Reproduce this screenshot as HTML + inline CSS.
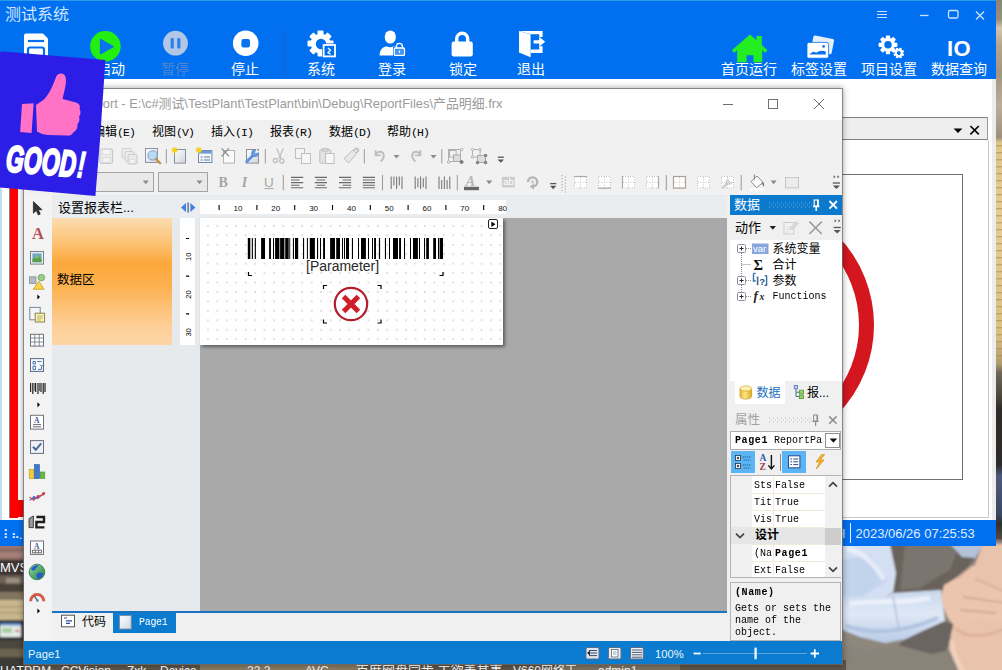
<!DOCTYPE html>
<html lang="zh-CN">
<head>
<meta charset="utf-8">
<title>测试系统</title>
<style>
html,body{margin:0;padding:0;}
body{width:1002px;height:670px;position:relative;overflow:hidden;background:#6b5f52;font-family:"Liberation Sans","Noto Sans CJK SC",sans-serif;font-size:12px;color:#000;}
.a{position:absolute;}
.t{position:absolute;white-space:nowrap;line-height:1;}
.ui{font-family:"Liberation Sans","Noto Sans CJK SC",sans-serif;}
.mono{font-family:"Liberation Mono",monospace;font-size:11.5px;letter-spacing:-.9px;position:relative;top:0px;}
.pg{position:absolute;white-space:nowrap;line-height:1;font-family:"Liberation Mono",monospace;font-size:10px;transform:scaleY(1.18);transform-origin:0 0;}
.ss{font-family:"Liberation Mono","Noto Sans CJK SC",monospace;}
svg{position:absolute;overflow:visible;}
/* main window */
#main{left:0;top:0;width:996px;height:546px;background:#fff;overflow:hidden;}
#hdr{left:0;top:0;width:996px;height:79px;background:#0070f0;}
.lbl{color:#fff;font-size:14px;top:62px;}
/* designer */
#dsg{left:24px;top:89px;width:818px;height:575px;background:#f0f0f0;box-shadow:0 0 0 1px rgba(110,110,110,.75),0 0 6px 1px rgba(0,0,0,.38);overflow:hidden;}
</style>
</head>
<body>
<!-- WALLPAPER -->
<div class="a" id="wall" style="left:0;top:0;width:1002px;height:670px;">
<svg width="1002" height="670" viewBox="0 0 1002 670" style="left:0;top:0;">
<defs>
<linearGradient id="stone" x1="0" y1="0" x2="0" y2="1"><stop offset="0" stop-color="#c9b48c"/><stop offset=".25" stop-color="#d8c28f"/><stop offset=".5" stop-color="#cdb078"/><stop offset=".75" stop-color="#a08a68"/><stop offset="1" stop-color="#7f7468"/></linearGradient>
<linearGradient id="shirt" x1="0" y1="0" x2="1" y2="1"><stop offset="0" stop-color="#dbe6f5"/><stop offset=".5" stop-color="#c4d6ee"/><stop offset="1" stop-color="#b4c8e4"/></linearGradient>
<linearGradient id="skin" x1="0" y1="0" x2="1" y2="1"><stop offset="0" stop-color="#ecc9b4"/><stop offset="1" stop-color="#e2b59c"/></linearGradient>
</defs>
<!-- right strip -->
<defs>
<linearGradient id="stone2" gradientUnits="userSpaceOnUse" x1="0" y1="0" x2="0" y2="560">
<stop offset="0" stop-color="#8e8474"/><stop offset=".035" stop-color="#9a8f7c"/><stop offset=".05" stop-color="#d2c6b0"/><stop offset=".08" stop-color="#b5a78f"/><stop offset=".13" stop-color="#a39580"/><stop offset=".19" stop-color="#bcae96"/><stop offset=".245" stop-color="#9d8f79"/>
<stop offset=".255" stop-color="#dcc68a"/><stop offset=".4" stop-color="#e3cd92"/><stop offset=".6" stop-color="#d8c084"/><stop offset=".65" stop-color="#b09a6c"/>
<stop offset=".665" stop-color="#6e665a"/><stop offset=".71" stop-color="#4a443c"/><stop offset=".73" stop-color="#2e2a26"/><stop offset=".83" stop-color="#2c2a2a"/><stop offset=".85" stop-color="#4c5a7a"/><stop offset=".92" stop-color="#3c4660"/><stop offset=".935" stop-color="#322f2e"/><stop offset=".965" stop-color="#5a4a42"/><stop offset=".985" stop-color="#e6c6b2"/><stop offset="1" stop-color="#e8c8b4"/>
</linearGradient>
<pattern id="straw" width="8" height="7" patternUnits="userSpaceOnUse"><rect width="8" height="7" fill="none"/><rect y="5" width="8" height="1.4" fill="#a8864a" opacity=".55"/></pattern>
</defs>
<rect x="990" y="0" width="12" height="560" fill="url(#stone2)"/>
<rect x="990" y="143" width="12" height="218" fill="url(#straw)"/>
<!-- bottom right photo -->
<defs><filter id="soft" x="-5%" y="-5%" width="110%" height="110%"><feGaussianBlur stdDeviation="0.9"/></filter>
<linearGradient id="slv" x1="0" y1="0" x2="0" y2="1"><stop offset="0" stop-color="#c9d8ee"/><stop offset=".45" stop-color="#dfe8f6"/><stop offset="1" stop-color="#b9cbe6"/></linearGradient>
</defs>
<g filter="url(#soft)">
<rect x="838" y="540" width="170" height="136" fill="#8b847b"/>
<polygon points="838,628 860,637 885,643 906,639 925,630 931,654 898,645 870,650 838,644" fill="#8e877d"/>
<polygon points="860,660 900,648 932,655 948,652 958,676 838,676 838,650" fill="#8a8379"/>
<!-- vest upper -->
<polygon points="889,544 983,544 974,559 968,567 956,577 941,591 893,597 896,573" fill="#6a625b"/>
<polygon points="905,544 960,544 950,570 920,588 900,590" fill="#7a746e"/>
<!-- collar/shirt top right -->
<polygon points="950,544 984,544 975,558 962,557" fill="#b4c2da"/>
<!-- shirt body -->
<polygon points="838,544 890,544 896,573 893,592 885,597 838,600" fill="#d3e0f3"/>
<polygon points="838,560 870,556 888,580 860,598 838,598" fill="#c2d3ec"/>
<path d="M846,548 C862,552 874,562 884,580" stroke="#eef3fb" stroke-width="5" fill="none" opacity=".8"/>
<!-- sleeve -->
<polygon points="838,596 885,597 893,593 941,590 945,621 925,630 906,639 885,643 860,637 838,628" fill="url(#slv)"/>
<path d="M850,604 C872,600 900,604 930,598" stroke="#eef3fb" stroke-width="5" fill="none" opacity=".85"/>
<path d="M846,626 C870,634 900,634 938,618" stroke="#a9bddc" stroke-width="4" fill="none" opacity=".8"/>
<path d="M893,596 l6,34" stroke="#aebfdc" stroke-width="2" fill="none" opacity=".7"/>
<!-- vest lower -->
<polygon points="925,630 945,621 956,626 951,637 946,651 931,654 898,645 906,639" fill="#6b6560"/>
<!-- woman's arm -->
<polygon points="983,544 1008,544 1008,676 960,676 956,664 949,649 951,634 954,622 970,600 972,572" fill="#e9c3ac"/>
<path d="M956,628 C966,640 990,636 1006,628" stroke="#d9a78f" stroke-width="2.4" fill="none" opacity=".8"/>
<path d="M952,640 C952,655 960,668 966,676" stroke="#f2d3c0" stroke-width="5" fill="none" opacity=".8"/>
<!-- hand -->
<path d="M941,597 L944,585 L958,577 L972,566 C976,565 978,568 977,571 L974,578 L1008,590 L1008,622 L975,621 L953,624 C947,619 943,608 941,597Z" fill="#ebc5ae"/>
<path d="M975,579 L1006,592 M963,597 L1006,603 M960,610 L996,613" stroke="#cfa088" stroke-width="1.3" fill="none"/>
<path d="M958,578 L970,568" stroke="#d8ac95" stroke-width="1.5" fill="none"/>
</g>
<!-- bottom left photo -->
<g filter="url(#soft)">
<rect x="-3" y="543" width="33" height="130" fill="#5a4e44"/>
<rect x="-3" y="545" width="33" height="15" fill="#9c7872"/>
<rect x="-3" y="549" width="33" height="1.6" fill="#7c5c58"/><rect x="-3" y="554" width="33" height="1.6" fill="#b48c84"/>
<rect x="-3" y="559.5" width="33" height="16" fill="#3c3632"/>
<rect x="-3" y="575.5" width="33" height="8" fill="#6c6256"/>
<rect x="6" y="578" width="14" height="6" fill="#9a9080"/>
<rect x="-3" y="583.5" width="33" height="9" fill="#4a4238"/>
<rect x="-3" y="592" width="33" height="8" fill="#80745e"/>
<rect x="-3" y="600" width="33" height="20" fill="#c9b68e"/>
<rect x="-3" y="606" width="33" height="1.4" fill="#b09a70"/><rect x="-3" y="612" width="33" height="1.4" fill="#b09a70"/>
<rect x="-3" y="620" width="27" height="20" fill="#2c3034"/>
<rect x="0" y="623" width="21" height="14" fill="#e4ece6"/>
<rect x="0" y="623" width="21" height="2.4" fill="#5a86c0"/>
<rect x="2" y="628" width="10" height="5" fill="#a8d0a0"/><rect x="15" y="630" width="4" height="1.6" fill="#d04030"/>
<rect x="-3" y="640" width="33" height="9" fill="#4c4a3c"/>
<rect x="-3" y="649" width="33" height="8" fill="#6c6450"/>
<rect x="-3" y="657" width="33" height="16" fill="#3e3a34"/>
</g>
<!-- bottom strip -->
<rect x="24" y="660" width="822" height="10" fill="#5e5346"/>
<rect x="200" y="660" width="160" height="10" fill="#8a7a62"/>
<rect x="560" y="660" width="120" height="10" fill="#7d7060"/>
</svg>
<div class="t ui" style="left:0;top:561px;color:#fff;font-size:13px;">MVS</div>
<div class="t ui" style="left:0;top:665px;color:#fff;font-size:12px;letter-spacing:.3px;">HATPRM</div>
<div class="t ui" style="left:61px;top:665px;color:#fff;font-size:12px;">CCVision</div>
<div class="t ui" style="left:127px;top:665px;color:#fff;font-size:12px;">Zxk</div>
<div class="t ui" style="left:160px;top:665px;color:#fff;font-size:12px;">Device</div>
<div class="t ui" style="left:247px;top:665px;color:#fff;font-size:12px;">22.2</div>
<div class="t ui" style="left:305px;top:665px;color:#fff;font-size:12px;">AVC</div>
<div class="t ui" style="left:356px;top:664px;color:#fff;font-size:13px;">百度网盘同步 工欲善其事</div>
<div class="t ui" style="left:513px;top:665px;color:#fff;font-size:12px;">V660网络工</div>
<div class="t ui" style="left:598px;top:665px;color:#fff;font-size:12px;">admin1</div>
</div>
<!-- MAIN WINDOW -->
<div class="a" id="main">
<div class="a" id="hdr"></div>
<div class="a" style="left:0;top:0;width:996px;height:1px;background:#2b9be8;"></div>
<div class="a" style="left:0;top:79px;width:1.5px;height:441px;background:#c6dcea;"></div>
<div class="t ui" style="left:5px;top:7px;font-size:16px;color:#d4e6ff;">测试系统</div>
<!-- window controls -->
<svg width="120" height="24" viewBox="870 4 120 24" style="left:870px;top:4px;" fill="none" stroke="#cfe2fb" stroke-width="1.3">
<path d="M877,11.5h10M877,14.5h10M877,17.5h10" stroke-width="1"/>
<path d="M920,15.5h8.5"/>
<rect x="948.5" y="10.5" width="9.5" height="7.5" rx="1.5"/>
<path d="M976,11.5l8,8M984,11.5l-8,8"/>
</svg>
<!-- toolbar icons -->
<svg width="996" height="79" viewBox="0 0 996 79" style="left:0;top:0;">
<!-- save -->
<path d="M26,33.5h17l5,5v23h-24v-26a2,2 0 0 1 2,-2z" fill="#fff"/>
<path d="M28,41h16" stroke="#0070f0" stroke-width="2.2" fill="none"/>
<rect x="28" y="47.5" width="16" height="12" rx="2" fill="none" stroke="#0070f0" stroke-width="2.2"/>
<!-- start -->
<circle cx="105.4" cy="46.2" r="15.3" fill="#22ee11"/>
<polygon points="100.6,39.6 100.6,53.6 113,46.6" fill="#0a72ee" stroke="#0a72ee" stroke-width="1.5" stroke-linejoin="round"/>
<!-- pause -->
<circle cx="175.5" cy="43.2" r="12.4" fill="#b2c6e6"/>
<rect x="170.6" y="38" width="3.2" height="10.5" rx="1" fill="#2f7fe8"/>
<rect x="177.2" y="38" width="3.2" height="10.5" rx="1" fill="#2f7fe8"/>
<!-- stop -->
<circle cx="245.7" cy="43.2" r="12.8" fill="#fff"/>
<rect x="241.4" y="39" width="8.6" height="8.6" rx="2" fill="#0a72ee"/>
<!-- separator -->
<rect x="283.7" y="31" width="1.2" height="47" fill="#2a62b8"/>
<!-- system gear -->
<g transform="translate(320.5,43.5)" fill="#fff">
<circle r="9.8"/>
<g id="gt"><rect x="-3" y="-13" width="6" height="6" rx="1"/></g>
<use href="#gt" transform="rotate(45)"/><use href="#gt" transform="rotate(90)"/><use href="#gt" transform="rotate(135)"/><use href="#gt" transform="rotate(180)"/><use href="#gt" transform="rotate(225)"/><use href="#gt" transform="rotate(270)"/><use href="#gt" transform="rotate(315)"/>
<circle cx="0.5" cy="0.5" r="5.2" fill="#0070f0"/>
</g>
<rect x="322" y="43.5" width="14" height="14" fill="#0070f0"/>
<rect x="323.6" y="45" width="11.4" height="11.4" fill="none" stroke="#fff" stroke-width="1.8"/>
<path d="M328,48l2.5,2.2l-2.5,2.4l2.5,1.6" stroke="#fff" stroke-width="1.3" fill="none"/>
<!-- login -->
<ellipse cx="390.3" cy="37" rx="5.6" ry="6.6" fill="#fff"/>
<path d="M379.6,55.6c0,-6 3,-8.4 7,-9.4c2.2,1.4 5,1.4 7.2,0c2,0.5 3.4,1.2 4.6,2.4v7z" fill="#fff"/>
<rect x="393" y="46.8" width="12.6" height="9.6" fill="#0070f0"/>
<rect x="394.3" y="48" width="10.2" height="7.4" rx="1" fill="#3f93f3" stroke="#fff" stroke-width="1.3"/>
<path d="M396.4,48v-1.6a3,3 0 0 1 6,0v1.6" fill="none" stroke="#fff" stroke-width="1.4"/>
<rect x="398.8" y="50.6" width="1.3" height="2.2" fill="#fff"/>
<!-- lock -->
<rect x="451.6" y="41.6" width="21.2" height="14.8" rx="2.2" fill="#fff"/>
<path d="M456.7,42v-3.2a5.5,5.5 0 0 1 11,0v3.2" fill="none" stroke="#fff" stroke-width="3.4"/>
<!-- exit -->
<path d="M519,31h23.6v6h-3.4v-2.8h-8.5z" fill="#fff"/>
<path d="M519,31l11.6,3.6v22.6l-11.6,-4.6z" fill="#fff"/>
<path d="M530.6,49.6h8.6v-3.4h3.4v6.8h-12z" fill="#fff"/>
<path d="M533.6,40.2h5.6v-3.4l6,5l-6,5v-3.4h-5.6z" fill="#fff"/>
<!-- home -->
<path d="M750,34.6l17.6,15.6l-2.4,2.6l-3,-2.6v12h-8.8v-7h-6.8v7h-9.4v-12l-3,2.6l-2.4,-2.6z" fill="#22ee22"/>
<rect x="756.4" y="36" width="5.4" height="9" fill="#22ee22"/>
<!-- label setting -->
<g transform="rotate(11 822 45)"><rect x="812" y="37" width="21" height="15.6" rx="1.6" fill="#e6eefc"/></g>
<rect x="807" y="42.4" width="21.6" height="15.8" rx="1.8" fill="#fff" stroke="#0070f0" stroke-width="0.8"/>
<path d="M809.6,54.6c2.6,-3 4.6,-3.6 6.4,-1.8c2,-1 4.6,-3.4 9.8,-1.2v3z" fill="#0a72ee"/>
<circle cx="823.6" cy="46.4" r="1.3" fill="#0a72ee"/>
<!-- project gears -->
<g transform="translate(888,44.8)" fill="#fff">
<circle r="7"/>
<g id="g2"><rect x="-2.1" y="-9.4" width="4.2" height="4.4" rx=".8"/></g>
<use href="#g2" transform="rotate(45)"/><use href="#g2" transform="rotate(90)"/><use href="#g2" transform="rotate(135)"/><use href="#g2" transform="rotate(180)"/><use href="#g2" transform="rotate(225)"/><use href="#g2" transform="rotate(270)"/><use href="#g2" transform="rotate(315)"/>
<circle r="3.7" fill="#0070f0"/>
</g>
<g transform="translate(898.8,53) rotate(22)" fill="#fff">
<circle r="3.8"/>
<g id="g3"><rect x="-1.3" y="-5.4" width="2.6" height="3" rx=".5"/></g>
<use href="#g3" transform="rotate(45)"/><use href="#g3" transform="rotate(90)"/><use href="#g3" transform="rotate(135)"/><use href="#g3" transform="rotate(180)"/><use href="#g3" transform="rotate(225)"/><use href="#g3" transform="rotate(270)"/><use href="#g3" transform="rotate(315)"/>
<circle r="1.9" fill="#0070f0"/>
</g>
</svg>
<div class="t ui" style="left:947px;top:38px;font-size:22px;font-weight:bold;color:#fff;letter-spacing:.5px;">IO</div>
<div class="t ui lbl" style="left:24px;">保存</div>
<div class="t ui lbl" style="left:97px;">启动</div>
<div class="t ui lbl" style="left:161px;color:#4f86d0;">暂停</div>
<div class="t ui lbl" style="left:231px;">停止</div>
<div class="t ui lbl" style="left:307px;">系统</div>
<div class="t ui lbl" style="left:378px;">登录</div>
<div class="t ui lbl" style="left:449px;">锁定</div>
<div class="t ui lbl" style="left:517px;">退出</div>
<div class="t ui lbl" style="left:721px;">首页运行</div>
<div class="t ui lbl" style="left:791px;">标签设置</div>
<div class="t ui lbl" style="left:861px;">项目设置</div>
<div class="t ui lbl" style="left:931px;">数据查询</div>
<!-- content area -->
<div class="a" style="left:8.6px;top:88px;width:1.2px;height:430px;background:#858585;"></div>
<div class="a" style="left:9.8px;top:88px;width:8px;height:430px;background:#fe0000;"></div>
<div class="a" style="left:10px;top:500px;width:20px;height:17px;background:#fe0000;"></div>
<!-- right dock panel -->
<div class="a" style="left:830px;top:117px;width:158px;height:23px;background:#eeeeee;border-top:1px solid #7f7f7f;border-bottom:1px solid #7f7f7f;border-right:1px solid #9a9a9a;box-sizing:border-box;"></div>
<div class="a" style="left:988px;top:140px;width:1px;height:378px;background:#c9c9c9;"></div>
<div class="a" style="left:830px;top:517px;width:159px;height:1px;background:#c9c9c9;"></div>
<div class="a" style="left:992px;top:79px;width:4px;height:441px;background:#ececec;"></div>
<svg width="30" height="14" viewBox="950 123 30 14" style="left:950px;top:123px;">
<polygon points="953.6,128.4 962.4,128.4 958,133" fill="#000"/>
<path d="M970.4,126l8.4,8.4M978.8,126l-8.4,8.4" stroke="#000" stroke-width="1.6" fill="none"/>
</svg>
<div class="a" style="left:830px;top:174px;width:133px;height:306px;border:1px solid #6e6e6e;box-sizing:border-box;overflow:hidden;">
<div class="a" style="left:-213px;top:21.5px;width:226px;height:226px;border:15px solid #d4161f;border-radius:50%;"></div>
</div>
<!-- status bar -->
<div class="a" style="left:0;top:520px;width:996px;height:26px;background:#0070f0;"></div>
<div class="a" style="left:850.4px;top:523px;width:1.1px;height:20px;background:#e8f0ff;"></div>
<div class="t ui" id="dt" style="left:855.5px;top:526.6px;font-size:13px;color:#e0eeff;">2023/06/26 07:25:53</div>
<div class="t ui" style="left:836px;top:527px;font-size:13px;color:#cfe0fb;">H</div>
<div class="t ui" style="left:3px;top:529px;font-size:12px;color:#fff;letter-spacing:-1px;">⠇⠦.</div>
</div>
<!-- DESIGNER WINDOW -->
<div class="a" id="dsg">
<div class="a" id="dg" style="left:-24px;top:-89px;width:1002px;height:670px;">
<!-- title bar -->
<div class="a" style="left:24px;top:89px;width:819px;height:31px;background:#fff;"></div>
<div class="t ui" id="ttl" style="left:54px;top:98px;font-size:12.9px;color:#9b9b9b;">FastReport - E:\c#测试\TestPlant\TestPlant\bin\Debug\ReportFiles\产品明细.frx</div>
<svg width="120" height="24" viewBox="715 92 120 24" style="left:715px;top:92px;" fill="none" stroke="#6f6f6f" stroke-width="1">
<path d="M723,104.5h10"/>
<rect x="768.5" y="99.5" width="9" height="9"/>
<path d="M814,99l10,10M824,99l-10,10"/>
</svg>
<!-- menu bar -->
<div class="a" id="menu" style="left:24px;top:120px;width:819px;height:24px;background:#f0f0f0;"></div>
<div class="t" style="left:39px;top:126px;font-size:12px;"><span class="ui">文件</span><span class="mono">(F)</span></div>
<div class="t" style="left:93px;top:126px;font-size:12px;"><span class="ui">编辑</span><span class="mono">(E)</span></div>
<div class="t" style="left:152px;top:126px;font-size:12px;"><span class="ui">视图</span><span class="mono">(V)</span></div>
<div class="t" style="left:211px;top:126px;font-size:12px;"><span class="ui">插入</span><span class="mono">(I)</span></div>
<div class="t" style="left:270px;top:126px;font-size:12px;"><span class="ui">报表</span><span class="mono">(R)</span></div>
<div class="t" style="left:329px;top:126px;font-size:12px;"><span class="ui">数据</span><span class="mono">(D)</span></div>
<div class="t" style="left:387px;top:126px;font-size:12px;"><span class="ui">帮助</span><span class="mono">(H)</span></div>

<!-- toolbars -->
<div class="a" id="tb1" style="left:24px;top:144px;width:819px;height:25px;background:#f1f1f1;"></div>
<div class="a" id="tb2" style="left:24px;top:169px;width:819px;height:26px;background:#f1f1f1;"></div>
<svg width="819" height="52" viewBox="24 144 819 52" style="left:24px;top:144px;">
<defs>
<linearGradient id="pgg" x1="0" y1="0" x2="1" y2="1"><stop offset="0" stop-color="#fff"/><stop offset="1" stop-color="#cfd3da"/></linearGradient>
</defs>
<!-- row1 -->
<g opacity=".6">
<rect x="100" y="149" width="12.6" height="14.4" rx="1.2" fill="#e6e6e6" stroke="#a8a8a8" stroke-width="1"/>
<rect x="102.4" y="149.6" width="7.6" height="5" fill="#f8f8f8" stroke="#bdbdbd" stroke-width=".6"/>
<rect x="102.4" y="157.4" width="8" height="5" fill="#f3f3f3" stroke="#bdbdbd" stroke-width=".6"/>
<rect x="122" y="148.6" width="9" height="9.6" rx="1" fill="#ececec" stroke="#b0b0b0" stroke-width=".9"/>
<rect x="125" y="151.6" width="9" height="9.6" rx="1" fill="#ececec" stroke="#b0b0b0" stroke-width=".9"/>
<rect x="128" y="154.4" width="9" height="9.6" rx="1" fill="#e6e6e6" stroke="#a8a8a8" stroke-width=".9"/>
<rect x="130" y="159.6" width="5" height="3.6" fill="#f8f8f8" stroke="#bbb" stroke-width=".5"/>
</g>
<!-- preview -->
<rect x="145.5" y="148.5" width="12" height="14" fill="url(#pgg)" stroke="#8d95a3" stroke-width="1"/>
<circle cx="152.6" cy="155.4" r="4.6" fill="#bcd9f2" stroke="#7ea6d0" stroke-width="1.1"/>
<path d="M156,159l4.2,4.2" stroke="#c98a3a" stroke-width="2.2" stroke-linecap="round"/>
<path d="M166.3,149v14.6M265.3,149v14.6M364.3,149v14.6M441.8,149v14.6" stroke="#9a9a9a" stroke-width="1"/>
<!-- new page -->
<rect x="174.5" y="149.5" width="11" height="13.6" fill="url(#pgg)" stroke="#8a8f99" stroke-width="1"/>
<path d="M174.6,147.2v6M171.6,150.2h6M172.5,148.1l4.2,4.2M176.7,148.1l-4.2,4.2" stroke="#f3d21a" stroke-width="1.4"/>
<!-- new dialog -->
<rect x="198.5" y="150.5" width="13.4" height="12" fill="#f4f6fa" stroke="#6c8cb2" stroke-width="1"/>
<rect x="199" y="151" width="12.4" height="2.6" fill="#6e9cd8"/>
<path d="M200.6,157h2M204,157h6M200.6,160h2M204,160h6" stroke="#5a7a9a" stroke-width="1.1"/>
<path d="M198.8,147.2v6M195.8,150.2h6M196.7,148.1l4.2,4.2M200.9,148.1l-4.2,4.2" stroke="#f3d21a" stroke-width="1.4"/>
<!-- delete page -->
<rect x="223.5" y="150.5" width="11" height="12.6" fill="#fbfbfb" stroke="#b4b4b4" stroke-width="1"/>
<path d="M221.6,148.4l7.4,8M229,148.4l-7.4,8" stroke="#8a8a8a" stroke-width="1.3"/>
<!-- wrench page -->
<rect x="246.5" y="149.5" width="12" height="13.6" fill="url(#pgg)" stroke="#8a8f99" stroke-width="1"/>
<path d="M246.6,161.8l6.6,-6.6" stroke="#5f90dc" stroke-width="2.8" stroke-linecap="round"/>
<circle cx="255" cy="153.2" r="3.4" fill="#6a9ae2" stroke="#4a78c4" stroke-width=".6"/>
<path d="M255,153.2l1.200,-4.400l3.600,3.400z" fill="#eef0f4"/>
<!-- cut/copy/paste/brush (disabled) -->
<g opacity=".65" fill="none" stroke="#a4a4a4">
<path d="M276.6,148.6l4.6,10M283.4,148.6l-4.6,10" stroke-width="1.3"/>
<circle cx="275.4" cy="160.6" r="2.1" stroke-width="1.3"/><circle cx="281.8" cy="161" r="2.1" stroke-width="1.3"/>
<rect x="295.5" y="148.5" width="9" height="10" fill="#f7f7f7" stroke-width="1"/>
<rect x="301.5" y="153.5" width="9" height="10" fill="#fafafa" stroke-width="1"/>
<rect x="319.8" y="149.8" width="11" height="13.4" rx="1" fill="#dcdcdc" stroke-width="1"/>
<rect x="322.6" y="148.4" width="5.4" height="2.8" fill="#c8c8c8" stroke-width=".8"/>
<rect x="325.5" y="153.5" width="8.6" height="10" fill="#fafafa" stroke-width="1"/>
<path d="M344,158.4l9,-8.4l3.6,3.6l-8,9.4z" fill="#e2e2e2" stroke-width="1"/>
<path d="M353.6,150.6l3,-2.6l2,2l-2.4,3" stroke-width="1.6"/>
<path d="M375.6,150v5.4h5.4" stroke-width="1.8"/><path d="M376,155c1,-3.4 5,-4.4 7,-2c1.4,2 1,5.6 -2.4,8.4" stroke-width="2"/>
<path d="M420.4,150v5.4h-5.4" stroke-width="1.8"/><path d="M420,155c-1,-3.4 -5,-4.4 -7,-2c-1.400,2 -1,5.6 2.400,8.400" stroke-width="2"/>
</g>
<polygon points="393.4,155 399.6,155 396.500,158.600" fill="#8a8a8a"/>
<polygon points="430.400,155 436.600,155 433.500,158.600" fill="#8a8a8a"/>
<!-- group/ungroup -->
<g fill="none" stroke="#a6a6a6" stroke-width="1" opacity=".85">
<rect x="448.500" y="149.500" width="12" height="12"/><rect x="449.5" y="150.5" width="6.600" height="6.600" stroke="#a8a8a8"/>
<rect x="453.500" y="155" width="7" height="6.500" fill="#dadada" stroke="#a0a0a0"/>
<circle cx="461.600" cy="149.600" r="1.300" fill="#f4f4f4"/><circle cx="448.600" cy="162" r="1.300" fill="#f4f4f4"/><circle cx="461.600" cy="162" r="1.500" fill="#666" stroke="#666"/>
<rect x="472.500" y="149.500" width="7.600" height="7.600"/>
<rect x="477.500" y="155.500" width="8" height="7" fill="#dadada" stroke="#a0a0a0"/>
<circle cx="472.500" cy="149.500" r="1.200" fill="#f4f4f4"/><circle cx="480" cy="149.500" r="1.200" fill="#f4f4f4"/><circle cx="472.500" cy="157" r="1.200" fill="#f4f4f4"/>
<circle cx="477.500" cy="162.600" r="1.300" fill="#777" stroke="#666"/><circle cx="485.600" cy="162.600" r="1.300" fill="#777" stroke="#666"/><circle cx="485.600" cy="155.500" r="1.300" fill="#777" stroke="#666"/>
</g>
<path d="M497.800,157.200h6" stroke="#555" stroke-width="1.300"/><polygon points="497.600,159.400 504,159.400 500.800,162.800" fill="#555"/>
<!-- row2 -->
<rect x="80" y="172.500" width="73.500" height="19" fill="#e9e9e9" stroke="#a3a3a3" stroke-width="1"/>
<rect x="158.500" y="172.500" width="49" height="19" fill="#e9e9e9" stroke="#a3a3a3" stroke-width="1"/>
<polygon points="142.800,180.600 148.800,180.600 145.800,184.200" fill="#8a8a8a"/>
<polygon points="196.500,180.600 202.500,180.600 199.500,184.200" fill="#8a8a8a"/>
<g font-family="Liberation Serif, serif" font-size="14" fill="#a6a6a6">
<text x="218.600" y="186.800" font-weight="bold">B</text>
<text x="241.800" y="186.800" font-style="italic" font-weight="bold">I</text>
<text x="264" y="186.800" font-size="13.500" font-family="Liberation Sans, sans-serif">U</text>
</g>
<path d="M264.600,188.600h9" stroke="#a6a6a6" stroke-width="1"/>
<path d="M283.300,175v15.400M382.500,175v15.400M457.300,175v15.400M666.300,175v15.400M741.200,175v15.400" stroke="#9a9a9a" stroke-width="1"/>
<path d="M291.0,177.4h12.2M291.0,180.0h8.6M291.0,182.6h12.2M291.0,185.2h8.6M291.0,187.8h12.2" stroke="#6a6a6a" stroke-width="1.1" fill="none"/><path d="M314.8,177.4h12.2M316.6,180.0h8.6M314.8,182.6h12.2M316.6,185.2h8.6M314.8,187.8h12.2" stroke="#6a6a6a" stroke-width="1.1" fill="none"/><path d="M339.0,177.4h12.2M342.6,180.0h8.6M339.0,182.6h12.2M342.6,185.2h8.6M339.0,187.8h12.2" stroke="#6a6a6a" stroke-width="1.1" fill="none"/><path d="M362.8,177.4h12.2M362.8,180.0h12.2M362.8,182.6h12.2M362.8,185.2h12.2M362.8,187.8h12.2" stroke="#6a6a6a" stroke-width="1.1" fill="none"/>
<path d="M391.2,176.4v12.6M393.9,176.4v9.0M396.6,176.4v12.6M399.3,176.4v9.0M402.0,176.4v12.6" stroke="#7a7a7a" stroke-width="1.1" fill="none"/><path d="M415.2,176.4v12.6M417.9,178.2v9.0M420.6,176.4v12.6M423.3,178.2v9.0M426.0,176.4v12.6" stroke="#7a7a7a" stroke-width="1.1" fill="none"/><path d="M439.0,176.4v12.6M441.7,180.0v9.0M444.4,176.4v12.6M447.1,180.0v9.0M449.8,176.4v12.6" stroke="#7a7a7a" stroke-width="1.1" fill="none"/>
<text x="465.600" y="186" font-family="Liberation Serif, serif" font-size="14.500" font-style="italic" font-weight="bold" fill="#b9b9b9">A</text>
<rect x="464" y="186.800" width="15" height="3.400" fill="#686868"/>
<polygon points="486.200,180.600 492.200,180.600 489.200,184.200" fill="#8a8a8a"/>
<rect x="501.800" y="176.800" width="13" height="10.800" rx="1" fill="#cdcdcd"/>
<text x="503.300" y="185.400" font-family="Liberation Sans, sans-serif" font-size="9.500" fill="#fff">ab</text>
<path d="M528,182a4.600,4.600 0 1 1 4.600,4.600" fill="none" stroke="#b4b4b4" stroke-width="2.400"/>
<path d="M529.600,186.600l4.400,-3v6z" fill="#b4b4b4"/><circle cx="532.600" cy="182" r="1.400" fill="#c4c4c4"/>
<path d="M550.200,183.600h6" stroke="#555" stroke-width="1.300"/><polygon points="550,185.800 556.400,185.800 553.200,189.200" fill="#555"/>
<path d="M562,175v16M565.400,176.500v16" stroke="#b0b0b0" stroke-width="1.200" stroke-dasharray="1.200 1.800"/>
<rect x="574" y="176" width="13" height="12.6" fill="#fff"/><rect x="574.5" y="176.5" width="12" height="11.6" fill="none" stroke="#b8b8b8" stroke-width="1" stroke-dasharray="1 1.5"/><path d="M580.5,177v11M575,182.3h11" stroke="#c4c4c4" stroke-width="1" stroke-dasharray="1 1.5"/><path d="M574,176.5h13" stroke="#aaa" stroke-width="1.2"/><rect x="598" y="176" width="13" height="12.6" fill="#fff"/><rect x="598.5" y="176.5" width="12" height="11.6" fill="none" stroke="#b8b8b8" stroke-width="1" stroke-dasharray="1 1.5"/><path d="M604.5,177v11M599,182.3h11" stroke="#c4c4c4" stroke-width="1" stroke-dasharray="1 1.5"/><path d="M598,188.2h13" stroke="#aaa" stroke-width="1.2"/><rect x="622" y="176" width="13" height="12.6" fill="#fff"/><rect x="622.5" y="176.5" width="12" height="11.6" fill="none" stroke="#b8b8b8" stroke-width="1" stroke-dasharray="1 1.5"/><path d="M628.5,177v11M623,182.3h11" stroke="#c4c4c4" stroke-width="1" stroke-dasharray="1 1.5"/><path d="M622.5,176v12.6" stroke="#aaa" stroke-width="1.2"/><rect x="646" y="176" width="13" height="12.6" fill="#fff"/><rect x="646.5" y="176.5" width="12" height="11.6" fill="none" stroke="#b8b8b8" stroke-width="1" stroke-dasharray="1 1.5"/><path d="M652.5,177v11M647,182.3h11" stroke="#c4c4c4" stroke-width="1" stroke-dasharray="1 1.5"/><path d="M658.5,176v12.6" stroke="#aaa" stroke-width="1.2"/><rect x="673" y="176" width="13" height="12.6" fill="#fff"/><rect x="673.5" y="176.5" width="12" height="11.6" fill="none" stroke="#b8b8b8" stroke-width="1" stroke-dasharray="1 1.5"/><path d="M679.5,177v11M674,182.3h11" stroke="#c4c4c4" stroke-width="1" stroke-dasharray="1 1.5"/><rect x="673.5" y="176.5" width="12" height="11.6" fill="none" stroke="#a9a29a" stroke-width="1.2"/><rect x="697" y="176" width="13" height="12.6" fill="#fff"/><rect x="697.5" y="176.5" width="12" height="11.6" fill="none" stroke="#b8b8b8" stroke-width="1" stroke-dasharray="1 1.5"/><path d="M703.5,177v11M698,182.3h11" stroke="#c4c4c4" stroke-width="1" stroke-dasharray="1 1.5"/><rect x="721" y="176" width="13" height="12.6" fill="#fff"/><rect x="721.5" y="176.5" width="12" height="11.6" fill="none" stroke="#b8b8b8" stroke-width="1" stroke-dasharray="1 1.5"/><path d="M727.5,177v11M722,182.3h11" stroke="#c4c4c4" stroke-width="1" stroke-dasharray="1 1.5"/>
<path d="M723,187.600l5.600,-5.600" stroke="#cfcfcf" stroke-width="2.600" stroke-linecap="round"/>
<path d="M728,178.800a3,3 0 1 0 4,4l-2.200,-.4l-1.200,-1.400z" fill="#d6d6d6" stroke="#bcbcbc" stroke-width=".5"/>
<!-- fill bucket -->
<path d="M751,181.600l6,-5.600l6,6.400l-6.400,5.400z" fill="#fafafa" stroke="#8c8c8c" stroke-width="1"/>
<path d="M754.400,174.400v5" stroke="#8c8c8c" stroke-width="1.200"/>
<path d="M762.600,181.400c1.400,1 1.800,3 1.200,5c-1.400,-1 -1.800,-2.800 -1.200,-5z" fill="#666"/>
<rect x="750" y="188.400" width="13.600" height="2.200" fill="#fff"/>
<polygon points="770.600,180.600 776.600,180.600 773.600,184.200" fill="#8a8a8a"/>
<rect x="785.500" y="177.500" width="13" height="10.400" fill="#ececec" stroke="#c6c6c6" stroke-width="1"/>
<path d="M833.600,175.200l2,1.600l-2,1.600zM837.400,175.200l2,1.600l-2,1.600z" fill="#666"/>
<path d="M832.800,183h7.200" stroke="#555" stroke-width="1.300"/><polygon points="832.800,185.400 840,185.400 836.400,189" fill="#555"/>
</svg>

<!-- workspace -->
<div class="a" id="ws" style="left:24px;top:195px;width:706px;height:416px;background:#e7eaec;"></div>
<div class="a" style="left:24px;top:195px;width:28px;height:446px;background:#f3f3f3;"></div>
<div class="a" style="left:52px;top:196px;width:675px;height:22px;background:#e9edf0;"></div>
<div class="t ui" style="left:58px;top:201px;font-size:13px;color:#000;">设置报表栏...</div>
<svg width="18" height="12" viewBox="180 201 18 12" style="left:180px;top:201px;">
<polygon points="181,207.5 186,203 186,212" fill="#3f7fe0"/><rect x="187.4" y="202.5" width="1.4" height="10" fill="#5a6a8a"/><polygon points="195.4,207.5 190.4,203 190.4,212" fill="#3f7fe0"/>
</svg>
<!-- orange band -->
<div class="a" style="left:52px;top:218px;width:120px;height:127px;background:linear-gradient(180deg,#fbdcb0 0%,#fcc57a 18%,#fca73a 36%,#fcb252 55%,#fdcf98 85%,#fdd6a6 100%);"></div>
<div class="t ui" style="left:57px;top:274px;font-size:12.5px;">数据区</div>
<!-- vertical ruler -->
<div class="a" style="left:180px;top:218px;width:15px;height:127px;background:#fff;"></div>
<svg width="15" height="127" viewBox="180 218 15 127" style="left:180px;top:218px;">
<path d="M186,238.5h3.2M186,276.2h3.2M186,313.8h3.2" stroke="#000" stroke-width="1.2"/>
<g font-family="Liberation Sans, sans-serif" font-size="7.6" fill="#000" text-anchor="middle">
<text transform="translate(190.6,256.8) rotate(-90)">10</text>
<text transform="translate(190.6,294.6) rotate(-90)">20</text>
<text transform="translate(190.6,332.4) rotate(-90)">30</text>
</g>
</svg>
<!-- horizontal ruler -->
<div class="a" style="left:200px;top:200px;width:306px;height:14px;background:#fff;"></div>
<svg width="320" height="14" viewBox="200 200 320 14" style="left:200px;top:200px;">
<path d="M219.1,205v5M256.9,205v5M294.7,205v5M332.5,205v5M370.3,205v5M408.1,205v5M445.9,205v5M483.7,205v5" stroke="#000" stroke-width="1.1"/>
<g font-family="Liberation Sans, sans-serif" font-size="8" fill="#111" text-anchor="middle">
<text x="238" y="210.6">10</text><text x="275.8" y="210.6">20</text><text x="313.6" y="210.6">30</text><text x="351.4" y="210.6">40</text><text x="389.2" y="210.6">50</text><text x="427" y="210.6">60</text><text x="464.8" y="210.6">70</text><text x="502.6" y="210.6">80</text>
</g>
</svg>
<!-- grey workspace -->
<div class="a" style="left:200px;top:218px;width:527px;height:393px;background:#a9a9a9;"></div>
<!-- page -->
<div class="a" style="left:200px;top:218px;width:303px;height:127px;background-color:#fff;background-image:radial-gradient(circle,#c9c9c9 0.55px,transparent 0.85px);background-size:9.45px 9.45px;background-position:3.2px 3.2px;box-shadow:2px 2px 3px rgba(0,0,0,.45);"></div>
<svg width="310" height="130" viewBox="200 218 310 130" style="left:200px;top:218px;">
<g fill="#000"><rect x="247.8" y="238" width="2.5" height="21"/><rect x="251.8" y="238" width="1.1" height="21"/><rect x="254.8" y="238" width="1.1" height="21"/><rect x="261.1" y="238" width="3.9" height="21"/><rect x="269.1" y="238" width="1.8" height="21"/><rect x="273.0" y="238" width="1.0" height="21"/><rect x="275.1" y="238" width="4.3" height="21"/><rect x="280.1" y="238" width="4.3" height="21"/><rect x="285.2" y="238" width="3.5" height="21"/><rect x="289.3" y="238" width="0.9" height="21"/><rect x="292.9" y="238" width="1.1" height="21"/><rect x="295.0" y="238" width="3.2" height="21"/><rect x="303.0" y="238" width="1.1" height="21"/><rect x="306.9" y="238" width="1.0" height="21"/><rect x="309.8" y="238" width="5.1" height="21"/><rect x="317.0" y="238" width="1.1" height="21"/><rect x="320.0" y="238" width="1.0" height="21"/><rect x="323.1" y="238" width="1.9" height="21"/><rect x="330.1" y="238" width="4.9" height="21"/><rect x="336.2" y="238" width="3.8" height="21"/><rect x="342.0" y="238" width="1.0" height="21"/><rect x="344.0" y="238" width="1.0" height="21"/><rect x="346.0" y="238" width="3.0" height="21"/><rect x="351.9" y="238" width="1.1" height="21"/><rect x="358.0" y="238" width="1.0" height="21"/><rect x="361.0" y="238" width="4.9" height="21"/><rect x="368.0" y="238" width="1.0" height="21"/><rect x="372.0" y="238" width="1.0" height="21"/><rect x="374.1" y="238" width="1.9" height="21"/><rect x="378.9" y="238" width="1.2" height="21"/><rect x="384.9" y="238" width="1.1" height="21"/><rect x="389.0" y="238" width="1.0" height="21"/><rect x="393.0" y="238" width="5.0" height="21"/><rect x="399.1" y="238" width="1.9" height="21"/><rect x="404.0" y="238" width="1.0" height="21"/><rect x="410.0" y="238" width="1.0" height="21"/><rect x="413.0" y="238" width="4.9" height="21"/><rect x="419.0" y="238" width="1.0" height="21"/><rect x="424.0" y="238" width="1.0" height="21"/><rect x="426.2" y="238" width="2.7" height="21"/><rect x="433.2" y="238" width="2.8" height="21"/><rect x="438.0" y="238" width="1.0" height="21"/><rect x="439.6" y="238" width="3.4" height="21"/></g>
<g fill="none" stroke="#000" stroke-width="1.2">
<path d="M248.5,272v3.5h3.5M443,272v3.5h-3.5"/>
<path d="M323.5,289v-3.5h3.5M377.5,285.5h3.5v3.5M323.5,319.5v3.5h3.5M377.5,323h3.5v-3.5"/>
</g>
<circle cx="351" cy="304" r="16.2" fill="#fff" stroke="#b41e2a" stroke-width="2.2"/>
<path d="M343.6,296.6l14.8,14.8M358.4,296.6l-14.8,14.8" stroke="#cf1c26" stroke-width="5" fill="none"/>
<rect x="488.5" y="219.5" width="9" height="9" rx="1.5" fill="#fff" stroke="#222" stroke-width="1"/>
<polygon points="491.4,221.4 491.4,227 495.4,224.2" fill="#000"/>
</svg>
<div class="t ui" style="left:306px;top:259px;font-size:14px;color:#2a2a2a;" id="param">[Parameter]</div>
<svg width="28" height="420" viewBox="24 196 28 420" style="left:24px;top:196px;">
<defs>
<linearGradient id="glb" x1="0" y1="0" x2="1" y2="1"><stop offset="0" stop-color="#8fdc9a"/><stop offset="1" stop-color="#1f7a46"/></linearGradient>
</defs>
<!-- pointer -->
<path d="M33.4,201.6v11.6l2.9,-2.6l2,4.4l2,-0.9l-2,-4.3h3.8z" fill="#333" stroke="#111" stroke-width=".6"/>
<!-- A -->
<text x="32" y="239.4" font-family="Liberation Serif, serif" font-size="16.5" font-weight="bold" fill="#b8505c">A</text>
<!-- picture -->
<rect x="30.5" y="251.5" width="13" height="12.6" fill="#eef0f2" stroke="#7a8088" stroke-width="1"/>
<rect x="32.4" y="253.4" width="9.2" height="8.8" fill="#6fa4d8"/>
<path d="M32.4,262.2v-3l2.4,-2l2.2,1.6l2.2,-2l2.4,2.2v3.2z" fill="#5aa04a"/>
<circle cx="37" cy="256.4" r="2" fill="#7ac060"/>
<!-- shapes -->
<rect x="29.4" y="276.8" width="6.6" height="6.6" fill="#b5b9bf" stroke="#8a8e96" stroke-width=".8"/>
<circle cx="41.4" cy="277.6" r="3.2" fill="#9bd08a" stroke="#5a9a4a" stroke-width=".8"/>
<path d="M38.8,281.2l5.4,8h-10.8z" fill="#f7d64a" stroke="#c89a1a" stroke-width=".8"/>
<polygon points="37.4,294.6 37.4,299.6 40,297.1" fill="#000"/>
<!-- subreport -->
<rect x="29.8" y="307.4" width="10.4" height="12.4" fill="#f3f5f8" stroke="#7c8696" stroke-width="1"/>
<rect x="35.2" y="313.2" width="9.4" height="8.8" fill="#fbf3b0" stroke="#8a8450" stroke-width="1"/>
<path d="M37,316h5.8M37,318h5.8M37,320h4" stroke="#9a9460" stroke-width=".7"/>
<!-- table -->
<rect x="30.5" y="334.3" width="13" height="11.8" fill="#fff" stroke="#6a727c" stroke-width="1"/>
<path d="M30.5,338h13M30.5,342h13M34.8,334.3v11.8M39.2,334.3v11.8" stroke="#6a727c" stroke-width=".8"/>
<!-- matrix -->
<rect x="30.5" y="358.6" width="13" height="12.8" fill="#f6f8fb" stroke="#5a6a8a" stroke-width="1"/>
<path d="M33,361.5h2.4v2.4h-2.4zM37.4,361.5h4M33,366v3.6h2.4v-3.6z" fill="none" stroke="#3c68a8" stroke-width=".9"/>
<path d="M38,369.4h3.6v-3.4M40,364.6l1.6,1.6l1.4,-1.6" fill="none" stroke="#3c68a8" stroke-width=".9"/>
<!-- barcode -->
<path d="M30.6,383v9M32.8,383v11M35.6,383v9M38,383v11M41,383v9M43.2,383v11M45,383v9" stroke="#222" stroke-width="1.2"/>
<path d="M34.2,383v8M39.6,383v8" stroke="#222" stroke-width=".7"/>
<polygon points="37.4,402.2 37.4,407.2 40,404.7" fill="#000"/>
<!-- rich text -->
<rect x="30.5" y="415.3" width="13" height="13.8" fill="#fff" stroke="#6a727c" stroke-width="1"/>
<text x="34" y="423" font-family="Liberation Serif, serif" font-size="7.5" font-weight="bold" fill="#3a5a9a">A</text>
<path d="M33,424.6h8M33,426.8h8" stroke="#444" stroke-width=".8"/>
<!-- checkbox -->
<rect x="30.5" y="440.6" width="13" height="12.8" fill="#eef1f5" stroke="#6a727c" stroke-width="1"/>
<path d="M33,446.8l2.8,3l5.4,-6.4" fill="none" stroke="#4a6a9a" stroke-width="2"/>
<!-- chart -->
<rect x="29.2" y="469.4" width="4.6" height="9.2" fill="#f0cc3a" stroke="#c09a1a" stroke-width=".6"/>
<rect x="34.4" y="464.6" width="5" height="14" fill="#3e78d0" stroke="#2a58a0" stroke-width=".6"/>
<rect x="40" y="472" width="4.8" height="6.6" fill="#6ab84e" stroke="#4a9030" stroke-width=".6"/>
<!-- sparkline -->
<path d="M29.6,500.2l4.6,-2.8l3.6,1.2l6.6,-5.8" stroke="#4a78d0" stroke-width="1.2" fill="none"/>
<path d="M29.6,497l4,3.2l4.6,-4l5.6,-1.6" stroke="#d04848" stroke-width="1.2" fill="none"/>
<circle cx="34" cy="497.6" r="1.5" fill="#3a68c0"/><circle cx="38" cy="496.4" r="1.5" fill="#d03a3a"/><circle cx="43.6" cy="493.4" r="1.5" fill="#d03a3a"/>
<!-- digital 12 -->
<path d="M29,527.6v-9l4.4,-2.6v11.6z" fill="#999" stroke="#222" stroke-width=".8"/>
<path d="M36.4,517h7.6v5h-7.6v5.4h8" stroke="#1e1e1e" stroke-width="2.4" fill="none"/>
<!-- cell text -->
<rect x="30.5" y="541" width="13" height="13.4" fill="#fff" stroke="#6a727c" stroke-width="1"/>
<text x="34" y="548.6" font-family="Liberation Serif, serif" font-size="7.5" font-weight="bold" fill="#3a5a9a">A</text>
<path d="M32.4,550.2h9.2v2.6h-9.2zM35.4,550.2v2.6M38.6,550.2v2.6" stroke="#444" stroke-width=".8" fill="none"/>
<!-- globe -->
<circle cx="37" cy="572" r="7.8" fill="url(#glb)" stroke="#2a7a4a" stroke-width=".8"/>
<path d="M31,569c2,-3 5,-4.4 7.4,-3.6c-0.6,2 -3,2.2 -3.2,4.4c-1.4,1.2 -3,0.8 -4.2,-0.8zM37,573.4c2,-1.4 4.6,-1 6,0.6c-0.6,2.6 -2.4,4.4 -4.6,5c-1.6,-1.6 -2.2,-3.8 -1.4,-5.6z" fill="#2a56d0"/>
<!-- gauge -->
<path d="M30.6,601.2a6.6,6.6 0 0 1 13.2,0" fill="none" stroke="#d45a4a" stroke-width="3"/>
<path d="M37.4,600.6l-3,-4.6" stroke="#555" stroke-width="1.3"/>
<circle cx="37.4" cy="600.6" r="1.4" fill="#6a8ab8"/>
<polygon points="37.4,608.6 37.4,613.6 40,611.1" fill="#000"/>
</svg>

<!-- right panels -->
<div class="a" id="rp" style="left:727px;top:195px;width:116px;height:446px;background:#f0f0f0;"></div>
<!-- data header -->
<div class="a" style="left:730px;top:195px;width:113px;height:19.5px;background:#0b7acc;"></div>
<div class="t ui" style="left:734px;top:198px;font-size:13px;color:#fff;">数据</div>
<svg width="80" height="20" viewBox="765 195 80 20" style="left:765px;top:195px;">
<rect x="769.0" y="202.5" width="1" height="1" fill="#6db3e6"/><rect x="769.0" y="206.5" width="1" height="1" fill="#6db3e6"/><rect x="771.0" y="204.5" width="1" height="1" fill="#6db3e6"/><rect x="773.0" y="202.5" width="1" height="1" fill="#6db3e6"/><rect x="773.0" y="206.5" width="1" height="1" fill="#6db3e6"/><rect x="775.0" y="204.5" width="1" height="1" fill="#6db3e6"/><rect x="777.0" y="202.5" width="1" height="1" fill="#6db3e6"/><rect x="777.0" y="206.5" width="1" height="1" fill="#6db3e6"/><rect x="779.0" y="204.5" width="1" height="1" fill="#6db3e6"/><rect x="781.0" y="202.5" width="1" height="1" fill="#6db3e6"/><rect x="781.0" y="206.5" width="1" height="1" fill="#6db3e6"/><rect x="783.0" y="204.5" width="1" height="1" fill="#6db3e6"/><rect x="785.0" y="202.5" width="1" height="1" fill="#6db3e6"/><rect x="785.0" y="206.5" width="1" height="1" fill="#6db3e6"/><rect x="787.0" y="204.5" width="1" height="1" fill="#6db3e6"/><rect x="789.0" y="202.5" width="1" height="1" fill="#6db3e6"/><rect x="789.0" y="206.5" width="1" height="1" fill="#6db3e6"/><rect x="791.0" y="204.5" width="1" height="1" fill="#6db3e6"/><rect x="793.0" y="202.5" width="1" height="1" fill="#6db3e6"/><rect x="793.0" y="206.5" width="1" height="1" fill="#6db3e6"/><rect x="795.0" y="204.5" width="1" height="1" fill="#6db3e6"/><rect x="797.0" y="202.5" width="1" height="1" fill="#6db3e6"/><rect x="797.0" y="206.5" width="1" height="1" fill="#6db3e6"/><rect x="799.0" y="204.5" width="1" height="1" fill="#6db3e6"/><rect x="801.0" y="202.5" width="1" height="1" fill="#6db3e6"/><rect x="801.0" y="206.5" width="1" height="1" fill="#6db3e6"/><rect x="803.0" y="204.5" width="1" height="1" fill="#6db3e6"/><rect x="805.0" y="202.5" width="1" height="1" fill="#6db3e6"/><rect x="805.0" y="206.5" width="1" height="1" fill="#6db3e6"/><rect x="807.0" y="204.5" width="1" height="1" fill="#6db3e6"/><rect x="809.0" y="202.5" width="1" height="1" fill="#6db3e6"/><rect x="809.0" y="206.5" width="1" height="1" fill="#6db3e6"/><rect x="811.0" y="204.5" width="1" height="1" fill="#6db3e6"/>
<g stroke="#fff" fill="none" stroke-width="1.5">
<path d="M813,206.5h6.4M816.2,206.5v4.5"/><rect x="814.2" y="200" width="4" height="6" fill="#0b7acc" stroke-width="1.2"/><path d="M817.7,200v6" stroke-width="1.4"/>
<path d="M829.4,201l7.6,7.6M837,201l-7.6,7.6" stroke-width="1.9"/>
</g>
</svg>
<!-- data toolbar -->
<div class="t ui" style="left:735px;top:220.5px;font-size:13px;">动作</div>
<svg width="80" height="26" viewBox="765 214 80 26" style="left:765px;top:214px;">
<polygon points="769.6,226 776,226 772.8,229.8" fill="#222"/>
<g opacity=".55"><rect x="784" y="222.5" width="10" height="11.5" fill="#f6f6f6" stroke="#aaa" stroke-width=".9"/><path d="M786,227h5M786,229.5h5M786,232h3" stroke="#bbb" stroke-width=".8"/><path d="M790,228l6.5,-6.5l2,2l-6.5,6.5z" fill="#c8c8c8" stroke="#aaa" stroke-width=".6"/></g>
<path d="M809.4,221.6l12.4,12.4M821.8,221.6l-12.4,12.4" stroke="#9a9a9a" stroke-width="1.5" fill="none"/>
<path d="M834.6,219.2l2,1.6l-2,1.6zM838.4,219.2l2,1.6l-2,1.6z" fill="#666"/>
<path d="M833.6,227.5h7.2" stroke="#555" stroke-width="1.3"/><polygon points="833.6,230 840.8,230 837.2,233.6" fill="#555"/>
</svg>
<!-- tree -->
<div class="a" style="left:730px;top:240px;width:112px;height:141px;background:#fff;"></div>
<svg width="112" height="70" viewBox="730 240 112 70" style="left:730px;top:240px;">
<g stroke="#8a8a8a" stroke-width="1" stroke-dasharray="1 1" fill="none">
<path d="M741.5,253v39M746,248.5h5.5M741.5,264.5h10M746,280.5h5.5M746,296.5h5.5"/>
</g>
<g fill="#fff" stroke="#8c8ca0" stroke-width="1">
<rect x="737.5" y="244.5" width="8" height="8" rx="1"/><rect x="737.5" y="276.5" width="8" height="8" rx="1"/><rect x="737.5" y="292.5" width="8" height="8" rx="1"/>
</g>
<g stroke="#223" stroke-width="1" fill="none">
<path d="M739.5,248.5h4M741.5,246.5v4M739.5,280.5h4M741.5,278.5v4M739.5,296.5h4M741.5,294.5v4"/>
</g>
<rect x="752" y="243.5" width="16.5" height="10.5" fill="#8aa6de"/>
<text x="753" y="251.6" font-family="Liberation Sans, sans-serif" font-size="9.5" fill="#fff">var</text>
<text x="753.6" y="270.4" font-family="Liberation Serif, serif" font-size="14.5" font-weight="bold" fill="#111">Σ</text>
<path d="M753.5,273.4h2.2M753.5,273.4v7.6h2.2" stroke="#3b6e9e" stroke-width="1.4" fill="none"/>
<path d="M766.6,275.6h-2M766.6,275.6v9.6h-2" stroke="#3b6e9e" stroke-width="1.4" fill="none"/>
<path d="M757.6,276.4v8.8" stroke="#3b6e9e" stroke-width="1.6" fill="none"/>
<text x="759.2" y="285.4" font-family="Liberation Sans, sans-serif" font-size="9.5" font-weight="bold" fill="#17507f">?</text>
<text x="753.4" y="299.6" font-family="Liberation Serif, serif" font-size="13" font-style="italic" font-weight="bold" fill="#222">f</text>
<text x="759.6" y="300.2" font-family="Liberation Serif, serif" font-size="9.5" font-style="italic" font-weight="bold" fill="#222">x</text>
</svg>
<div class="t ui" style="left:772.5px;top:242.5px;font-size:12px;">系统变量</div>
<div class="t ui" style="left:772.5px;top:258.5px;font-size:12px;">合计</div>
<div class="t ui" style="left:772.5px;top:274.5px;font-size:12px;">参数</div>
<div class="t" style="left:772.5px;top:291px;font-size:10px;font-family:'Liberation Mono',monospace;transform:scaleY(1.15);transform-origin:0 0;">Functions</div>
<!-- data tabs -->
<div class="a" style="left:730px;top:381px;width:112px;height:24px;background:#f0f0f0;"></div>
<div class="a" style="left:735px;top:381px;width:50px;height:22.5px;background:#fff;"></div>
<svg width="112" height="24" viewBox="730 381 112 24" style="left:730px;top:381px;">
<defs><linearGradient id="cyl" x1="0" y1="0" x2="1" y2="0"><stop offset="0" stop-color="#e8b730"/><stop offset=".45" stop-color="#fbe38a"/><stop offset="1" stop-color="#e0a820"/></linearGradient></defs>
<path d="M740,388.5v8a5.8,2.6 0 0 0 11.6,0v-8z" fill="url(#cyl)" stroke="#c8961c" stroke-width=".7"/>
<ellipse cx="745.8" cy="388.5" rx="5.8" ry="2.6" fill="#fdf0b4" stroke="#d4a326" stroke-width=".7"/>
<rect x="794.2" y="385.4" width="3.4" height="3.4" fill="#b8c8f0" stroke="#5a78c8" stroke-width=".8"/>
<path d="M796,389v7.5h3M796,392.2h3" stroke="#4a6a8a" stroke-width="1" fill="none"/>
<rect x="799.4" y="390.2" width="4" height="3.6" fill="#9ad06a" stroke="#4c9a30" stroke-width=".8"/>
<rect x="799.4" y="395" width="4" height="3.6" fill="#9ad06a" stroke="#4c9a30" stroke-width=".8"/>
</svg>
<div class="t ui" style="left:756.5px;top:387px;font-size:12px;color:#1a6fc0;">数据</div>
<div class="t ui" style="left:807px;top:387px;font-size:12px;">报...</div>
<!-- properties header -->
<div class="t ui" style="left:735px;top:413.5px;font-size:12.5px;color:#a2a2a2;">属性</div>
<svg width="80" height="20" viewBox="765 410 80 20" style="left:765px;top:410px;">
<rect x="769.0" y="417.5" width="1" height="1" fill="#c4c4c4"/><rect x="769.0" y="421.5" width="1" height="1" fill="#c4c4c4"/><rect x="771.0" y="419.5" width="1" height="1" fill="#c4c4c4"/><rect x="773.0" y="417.5" width="1" height="1" fill="#c4c4c4"/><rect x="773.0" y="421.5" width="1" height="1" fill="#c4c4c4"/><rect x="775.0" y="419.5" width="1" height="1" fill="#c4c4c4"/><rect x="777.0" y="417.5" width="1" height="1" fill="#c4c4c4"/><rect x="777.0" y="421.5" width="1" height="1" fill="#c4c4c4"/><rect x="779.0" y="419.5" width="1" height="1" fill="#c4c4c4"/><rect x="781.0" y="417.5" width="1" height="1" fill="#c4c4c4"/><rect x="781.0" y="421.5" width="1" height="1" fill="#c4c4c4"/><rect x="783.0" y="419.5" width="1" height="1" fill="#c4c4c4"/><rect x="785.0" y="417.5" width="1" height="1" fill="#c4c4c4"/><rect x="785.0" y="421.5" width="1" height="1" fill="#c4c4c4"/><rect x="787.0" y="419.5" width="1" height="1" fill="#c4c4c4"/><rect x="789.0" y="417.5" width="1" height="1" fill="#c4c4c4"/><rect x="789.0" y="421.5" width="1" height="1" fill="#c4c4c4"/><rect x="791.0" y="419.5" width="1" height="1" fill="#c4c4c4"/><rect x="793.0" y="417.5" width="1" height="1" fill="#c4c4c4"/><rect x="793.0" y="421.5" width="1" height="1" fill="#c4c4c4"/><rect x="795.0" y="419.5" width="1" height="1" fill="#c4c4c4"/><rect x="797.0" y="417.5" width="1" height="1" fill="#c4c4c4"/><rect x="797.0" y="421.5" width="1" height="1" fill="#c4c4c4"/><rect x="799.0" y="419.5" width="1" height="1" fill="#c4c4c4"/><rect x="801.0" y="417.5" width="1" height="1" fill="#c4c4c4"/><rect x="801.0" y="421.5" width="1" height="1" fill="#c4c4c4"/><rect x="803.0" y="419.5" width="1" height="1" fill="#c4c4c4"/><rect x="805.0" y="417.5" width="1" height="1" fill="#c4c4c4"/><rect x="805.0" y="421.5" width="1" height="1" fill="#c4c4c4"/><rect x="807.0" y="419.5" width="1" height="1" fill="#c4c4c4"/><rect x="809.0" y="417.5" width="1" height="1" fill="#c4c4c4"/><rect x="809.0" y="421.5" width="1" height="1" fill="#c4c4c4"/><rect x="811.0" y="419.5" width="1" height="1" fill="#c4c4c4"/>
<g stroke="#8e8e8e" fill="none" stroke-width="1.2">
<path d="M812.4,421.5h6.4M815.6,421.5v4.5"/><rect x="813.6" y="415" width="4" height="6" stroke-width="1"/><path d="M817.1,415v6" stroke-width="1.3"/>
<path d="M829.2,416.4l7.4,7.4M836.6,416.4l-7.4,7.4" stroke-width="1.5"/>
</g>
</svg>
<!-- dropdown -->
<div class="a" style="left:730px;top:431px;width:111px;height:19px;background:#fff;border:1px solid #adadad;box-sizing:border-box;"></div>
<div class="a" style="left:825px;top:432.5px;width:15px;height:15.5px;background:#fff;border:1px solid #8f8f8f;box-sizing:border-box;"></div>
<svg width="10" height="6" viewBox="0 0 10 6" style="left:828.6px;top:438px;"><polygon points="0.6,0.6 8.2,0.6 4.4,4.8" fill="#111"/></svg>
<div class="t" style="left:735px;top:435px;font-size:10px;font-family:'Liberation Mono',monospace;transform:scaleY(1.18);transform-origin:0 0;"><b style="letter-spacing:.6px;">Page1</b> ReportPa</div>
<!-- prop toolbar -->
<div class="a" style="left:731px;top:451px;width:24px;height:22px;background:#5bb5f4;"></div>
<div class="a" style="left:782px;top:451px;width:24px;height:22px;background:#5bb5f4;"></div>
<svg width="112" height="22" viewBox="730 451 112 22" style="left:730px;top:451px;">
<g fill="#fff" stroke="#234" stroke-width=".8"><rect x="735.5" y="455.5" width="5" height="5"/><rect x="735.5" y="463.5" width="5" height="5"/></g>
<path d="M736.8,458h2.4M738,456.8v2.4M736.8,466h2.4M738,464.8v2.4" stroke="#000" stroke-width=".9"/>
<path d="M742.5,457h8M743.5,460h7M742.5,465h8M743.5,468h7" stroke="#2c5f9a" stroke-width="1" stroke-dasharray="1.4 .8"/>
<text x="759.4" y="461.4" font-family="Liberation Serif, serif" font-size="9.5" font-weight="bold" fill="#2a5db0">A</text>
<text x="759.6" y="470.4" font-family="Liberation Serif, serif" font-size="9.5" font-weight="bold" fill="#a03a4a">Z</text>
<path d="M771.4,455v13.6M768.4,465.4l3,3.6l3,-3.6" stroke="#111" stroke-width="1.4" fill="none"/>
<path d="M780.5,454v17" stroke="#8a8a8a" stroke-width="1"/>
<rect x="788.5" y="455.8" width="11.4" height="12" fill="#fff" stroke="#2a4a8a" stroke-width="1"/>
<path d="M790.4,459h1.6M793.2,459h5M790.4,461.8h1.6M793.2,461.8h5M790.4,464.6h1.6M793.2,464.6h5" stroke="#2a4a8a" stroke-width="1"/>
<path d="M821.6,454.6l-5.6,7.4h3.6l-3.4,7l7.8,-9h-3.8l4.4,-5.4z" fill="#f3b52c" stroke="#d08a10" stroke-width=".7"/>
</svg>
<!-- prop grid -->
<div class="a" style="left:730px;top:475px;width:111px;height:103px;background:#f0f0f0;border:1px solid #b4b4b4;box-sizing:border-box;"></div>
<div class="a" style="left:752px;top:476px;width:73px;height:101px;background:#fff;"></div>
<div class="a" style="left:731px;top:527px;width:94px;height:17px;background:#e6e6e6;"></div>
<div class="a" style="left:825px;top:476px;width:15.5px;height:101px;background:#f0f0f0;"></div>
<div class="a" style="left:825px;top:527.5px;width:15.5px;height:17px;background:#cdcdcd;"></div>
<svg width="112" height="103" viewBox="730 475 112 103" style="left:730px;top:475px;">
<path d="M752,493.5h73M752,510.5h73M752,527.5h73M752,544.5h73M752,561.5h73M773.5,476v51M773.5,544v33" stroke="#f1ead8" stroke-width="1"/>
<path d="M829,486.6l4,-4l4,4M829,567.4l4,4l4,-4M736,533.6l4,4l4,-4" stroke="#444" stroke-width="1.7" fill="none"/>
</svg>
<div class="pg" style="top:479.6px;left:754px;">Sts</div><div class="pg" style="top:479.6px;left:775px;">False</div>
<div class="pg" style="top:496.6px;left:754px;">Tit</div><div class="pg" style="top:496.6px;left:775px;">True</div>
<div class="pg" style="top:513.6px;left:754px;">Vis</div><div class="pg" style="top:513.6px;left:775px;">True</div>
<div class="t ui" style="top:529px;left:755px;font-size:12px;font-weight:bold;">设计</div>
<div class="pg" style="top:547.6px;left:754px;">(Na</div><div class="pg" style="top:547.6px;left:775px;"><b style="letter-spacing:.6px;">Page1</b></div>
<div class="pg" style="top:564.6px;left:754px;">Ext</div><div class="pg" style="top:564.6px;left:775px;">False</div>
<div class="a" style="left:773px;top:476px;width:1px;height:101px;background:transparent;"></div>
<!-- description -->
<div class="a" style="left:730px;top:582px;width:111px;height:59px;background:#f0f0f0;border:1px solid #b4b4b4;box-sizing:border-box;"></div>
<div class="pg" style="top:586.5px;left:735px;"><b style="letter-spacing:.6px;">(Name)</b></div>
<div class="pg" style="top:602.5px;left:735px;">Gets or sets the</div>
<div class="pg" style="top:614.5px;left:735px;">name of the</div>
<div class="pg" style="top:626.5px;left:735px;">object.</div>

<!-- tabs -->
<div class="a" id="tabs" style="left:52px;top:611px;width:675px;height:30px;background:#f0f0f0;"></div>
<div class="a" style="left:52px;top:610.5px;width:675px;height:2.5px;background:#1874c0;"></div>
<div class="a" style="left:113px;top:613px;width:63px;height:19.5px;background:#0a7bce;"></div>
<svg width="130" height="20" viewBox="55 612 130 20" style="left:55px;top:612px;">
<rect x="61.5" y="615.2" width="13" height="11.6" fill="#fdfdf6" stroke="#555" stroke-width="1"/>
<path d="M64,618h3M66,620.8h6M66,623.4h4" stroke="#2a4ab0" stroke-width="1.2"/>
<defs><linearGradient id="pgi" x1="0" y1="0" x2="1" y2="1"><stop offset="0" stop-color="#fff"/><stop offset="1" stop-color="#ccd6e2"/></linearGradient></defs>
<rect x="119.6" y="615.6" width="11.6" height="13.4" fill="url(#pgi)" stroke="#7d8ea3" stroke-width=".9"/>
</svg>
<div class="t ui" style="left:82px;top:616px;font-size:12px;">代码</div>
<div class="t" style="left:139px;top:617px;font-size:10px;color:#fff;font-family:'Liberation Mono',monospace;transform:scaleY(1.18);transform-origin:0 0;letter-spacing:-.3px;">Page1</div>

<!-- status -->
<div class="a" id="sb" style="left:24px;top:641px;width:819px;height:23px;background:#0a7bce;"></div>
<div class="t ui" style="left:28px;top:648.5px;font-size:11.2px;color:#e8f4ff;">Page1</div>
<div class="t ui" style="left:655px;top:648.5px;font-size:11.2px;color:#e8f4ff;">100%</div>
<svg width="250" height="20" viewBox="580 643 250 20" style="left:580px;top:643px;">
<g>
<rect x="586" y="647.5" width="13" height="11.5" rx="1.5" fill="#dfe6ee" stroke="#5a6d86" stroke-width="1"/>
<path d="M589,650.5h8M589,653h8M589,655.6h8" stroke="#3a4e6a" stroke-width="1"/><path d="M587,653l3,-2.4v4.8z" fill="#1a2a44"/>
<rect x="608.4" y="647.5" width="12.6" height="11.5" rx="1.5" fill="#e8ecf2" stroke="#5a6d86" stroke-width="1"/>
<rect x="611.4" y="649.6" width="6.6" height="7.4" fill="#fff" stroke="#56677f" stroke-width=".8"/><path d="M613,652h3.6M613,654h3.6" stroke="#6a7a92" stroke-width=".7"/>
<rect x="630.6" y="647.5" width="12.6" height="11.5" fill="#f2f4f7" stroke="#5a6d86" stroke-width="1"/>
<path d="M632,650h10M632,652.4h10M632,654.8h10M632,657.2h10" stroke="#4a5a72" stroke-width="1"/>
</g>
<path d="M693.6,653.5h7.2" stroke="#fff" stroke-width="1.8"/>
<path d="M703,653.5h104" stroke="#58a6de" stroke-width="1"/>
<rect x="754.4" y="647.6" width="2.4" height="11.6" fill="#e8f2fb"/>
<path d="M810.6,653.5h8.4M814.8,649.3v8.4" stroke="#fff" stroke-width="1.8"/>
</svg>

</div>
</div>
<!-- STICKER -->
<div class="a" id="stk" style="left:0;top:0;width:120px;height:200px;">
<svg width="120" height="200" viewBox="0 0 120 200" style="left:0;top:0;">
<polygon points="0,52 3,51.6 105.4,60 100,140 95.4,196 0,187.4" fill="#2c1ee6"/>
<polygon points="22,104 33.6,103.2 31.6,133 20.2,132" fill="#ff72c6"/>
<path d="M36,105 L44,99.6 C50,93 53.6,84 56,77 C57.6,72.6 64,72 65.6,77 C67,83 64,92 62.6,99 L76,102.6 C79,103.4 80.6,106 79.6,109 C81,111.6 80.8,114.6 79,116.6 C80,119.4 79.4,122.4 77.4,124.2 C78,127.6 76.4,130.6 73.6,132 C72.6,134.6 70,135.8 67,135.6 L48,135 C43.6,134.8 40.6,133.6 37,131.6 Z" fill="#ff72c6"/>
</svg>
<div class="t ui" id="good" style="left:7.5px;top:139.5px;font-size:37px;font-weight:bold;font-style:italic;color:#fff;-webkit-text-stroke:2.4px #fff;transform-origin:0 0;transform:rotate(5deg) scaleX(.61);letter-spacing:.5px;">GOOD<span style="-webkit-text-stroke:1.6px #fff;margin-left:2px;">!</span></div>
</div>
</body>
</html>
